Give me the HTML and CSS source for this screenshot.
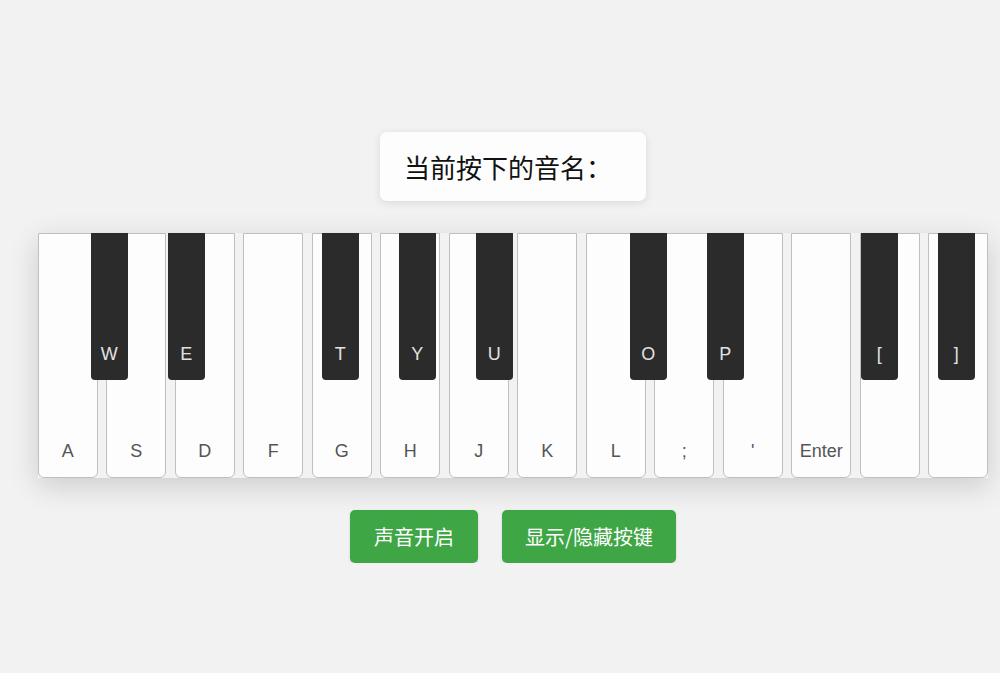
FILE: index.html
```html
<!DOCTYPE html>
<html lang="zh">
<head>
<meta charset="utf-8">
<title>Piano</title>
<link rel="stylesheet" href="styles.css">
</head>
<body>
<div class="page">
  <div class="note-box">当前按下的音名：</div>
  <div class="piano">
    <div class="white-row">
      <div class="wkey"><span>A</span></div>
      <div class="wkey"><span>S</span></div>
      <div class="wkey"><span>D</span></div>
      <div class="wkey"><span>F</span></div>
      <div class="wkey"><span>G</span></div>
      <div class="wkey"><span>H</span></div>
      <div class="wkey"><span>J</span></div>
      <div class="wkey"><span>K</span></div>
      <div class="wkey"><span>L</span></div>
      <div class="wkey"><span>;</span></div>
      <div class="wkey"><span>'</span></div>
      <div class="wkey"><span>Enter</span></div>
      <div class="wkey"><span></span></div>
      <div class="wkey"><span></span></div>
    </div>
    <div class="black-row">
      <div class="bkey"><span>W</span></div>
      <div class="bkey"><span>E</span></div>
      <div class="bkey empty"></div>
      <div class="bkey"><span>T</span></div>
      <div class="bkey"><span>Y</span></div>
      <div class="bkey"><span>U</span></div>
      <div class="bkey empty"></div>
      <div class="bkey"><span>O</span></div>
      <div class="bkey"><span>P</span></div>
      <div class="bkey empty"></div>
      <div class="bkey"><span>[</span></div>
      <div class="bkey"><span>]</span></div>
    </div>
  </div>
  <div class="controls">
    <button class="btn">声音开启</button>
    <button class="btn btn-wide">显示/隐藏按键</button>
  </div>
</div>
</body>
</html>
```
FILE: styles.css
```css
html, body {
  margin: 0;
  padding: 0;
  overflow: hidden;
  background: #f2f2f2;
  font-family: "Liberation Sans", Arial, "Noto Sans CJK SC", sans-serif;
}

.page {
  width: 1026px;
  display: flex;
  flex-direction: column;
  align-items: center;
  padding-top: 132px;
}

.note-box {
  background: #fdfdfd;
  border-radius: 7px;
  box-shadow: 0 2px 8px rgba(0, 0, 0, 0.1);
  height: 69px;
  box-sizing: border-box;
  padding: 0 34px 0 24px;
  display: flex;
  align-items: center;
  font-family: "Noto Sans CJK SC", sans-serif;
  font-size: 26px;
  color: #111;
}

.piano {
  position: relative;
  margin-top: 32px;
  box-shadow: 0 8px 28px rgba(0, 0, 0, 0.16);
}

.white-row {
  display: flex;
  gap: 8.5px;
}

.wkey {
  width: 60px;
  height: 245px;
  box-sizing: border-box;
  background: #fdfdfd;
  border: 1px solid #bfbfbf;
  border-radius: 0 0 6px 6px;
  display: flex;
  flex-direction: column;
  justify-content: flex-end;
  align-items: center;
  padding-bottom: 16px;
}

.wkey span {
  font-size: 18px;
  line-height: 20px;
  height: 20px;
  color: #555;
}

.black-row {
  position: absolute;
  top: 0;
  left: 53px;
  display: flex;
  gap: 40px;
}

.bkey {
  width: 37px;
  height: 147px;
  background: #2b2b2b;
  border-radius: 0 0 4px 4px;
  display: flex;
  flex-direction: column;
  justify-content: flex-end;
  align-items: center;
  padding-bottom: 16px;
  box-sizing: border-box;
}

.bkey.empty {
  visibility: hidden;
}

.bkey span {
  font-size: 18px;
  line-height: 20px;
  color: #e2e2e2;
}

.controls {
  margin-top: 32px;
  display: flex;
  gap: 24px;
}

.btn {
  height: 53px;
  padding: 0 24px;
  border: none;
  border-radius: 5px;
  background: #3fa646;
  color: #fff;
  font-family: "Noto Sans CJK SC", sans-serif;
  font-size: 20px;
  box-shadow: 0 1px 3px rgba(0, 0, 0, 0.12);
}

.btn-wide {
  padding: 0 23px;
}
```
